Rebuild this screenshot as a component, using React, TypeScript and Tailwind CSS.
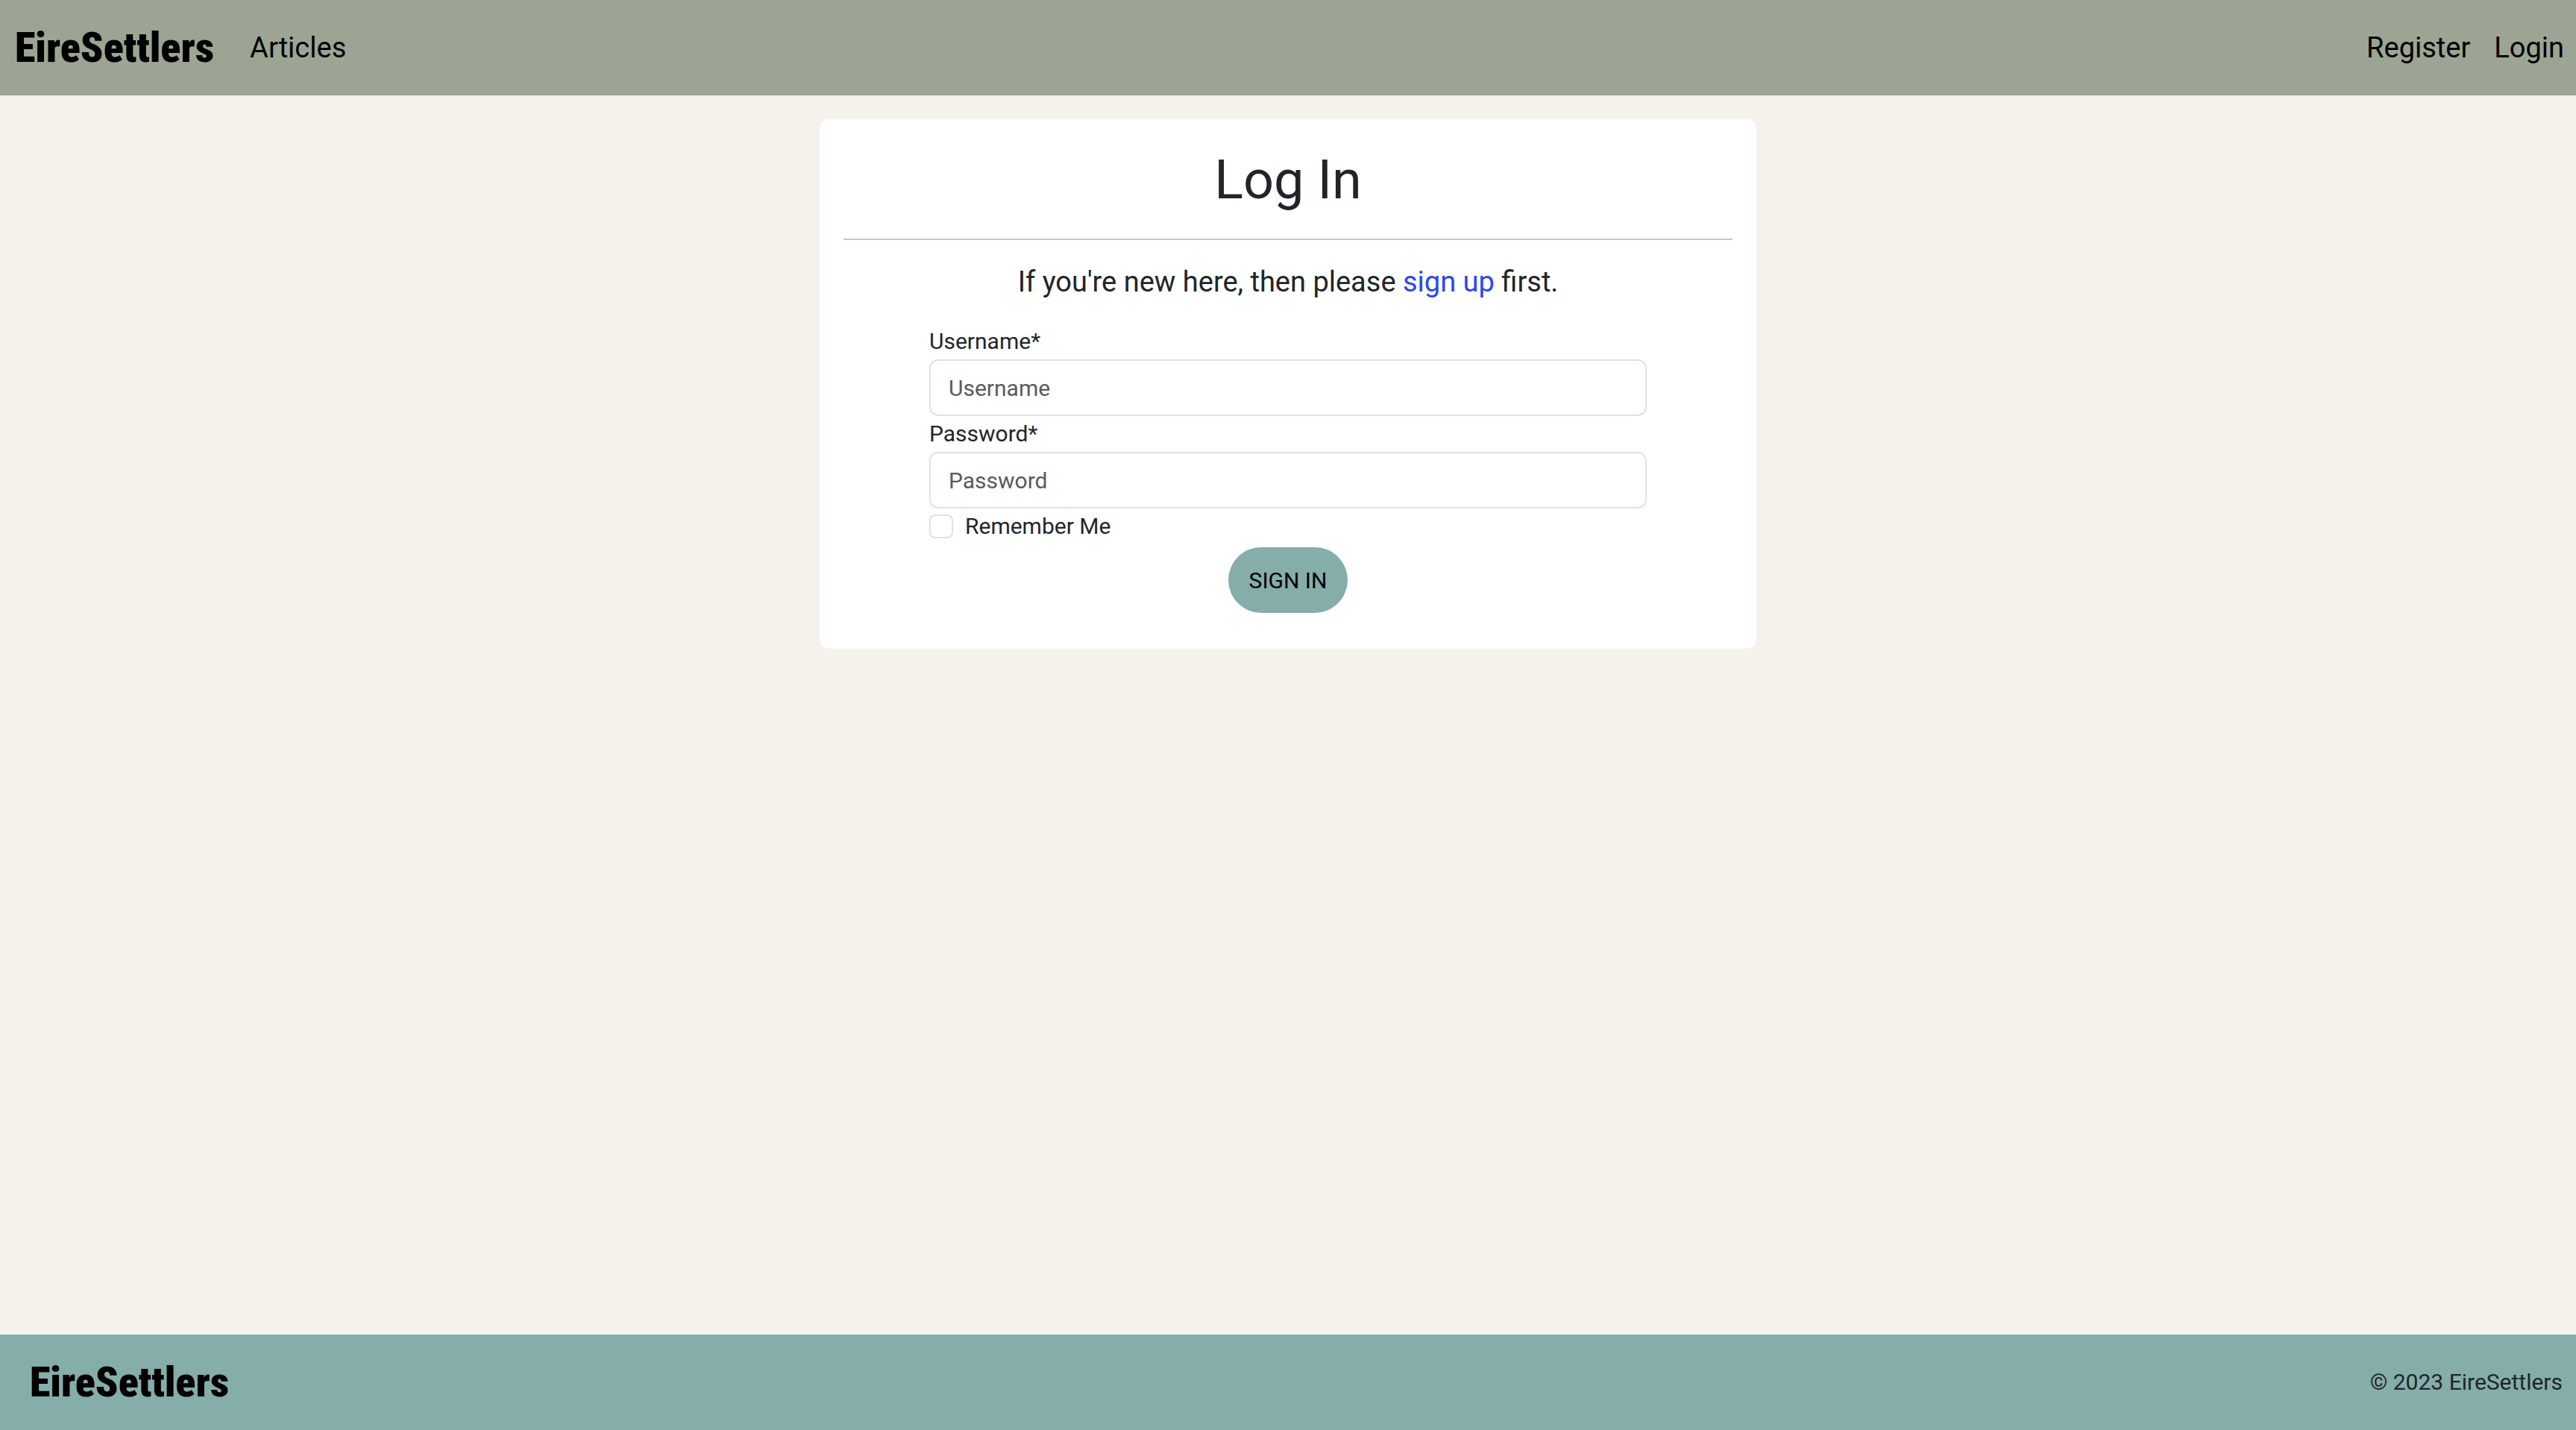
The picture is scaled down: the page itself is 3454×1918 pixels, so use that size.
import React from "react";

function Logo() {
  return (
    <a
      href="#home"
      className="font-['Roboto_Condensed','Roboto',sans-serif] text-[56px] leading-[64px] font-black text-black"
    >
      EireSettlers
    </a>
  );
}

function NavLink({ label }: { label: string }) {
  return (
    <a href={`#${label.toLowerCase()}`} className="text-[38px] leading-[64px] text-black">
      {label}
    </a>
  );
}

function Field({ id, label, type }: { id: string; label: string; type: string }) {
  return (
    <div className="flex flex-col">
      <label htmlFor={id} className="text-[30px] leading-[48px]">
        {label}*
      </label>
      <input
        id={id}
        type={type}
        placeholder={label}
        className="h-[76px] w-full rounded-xl border-2 border-[#dee2e6] bg-white px-6 text-[30px] placeholder:text-[#585b5e]"
      />
    </div>
  );
}

export default function App() {
  return (
    <div className="flex min-h-screen flex-col bg-[#f5f1eb] font-['Roboto',sans-serif] text-[#212529]">
      <header className="bg-[#9ca593]">
        <nav className="flex h-32 items-center justify-between pr-4 pl-5">
          <div className="flex items-center gap-12">
            <Logo />
            <NavLink label="Articles" />
          </div>
          <div className="flex items-center gap-8">
            <NavLink label="Register" />
            <NavLink label="Login" />
          </div>
        </nav>
      </header>

      <main className="flex grow flex-col items-center px-8 pt-8 pb-8">
        <section className="w-full max-w-[1256px] rounded-xl bg-white px-8 pt-8 pb-12">
          <h1 className="text-center text-[72px] leading-[100px]">Log In</h1>
          <hr className="mt-7 border-t-2 border-[#c7c8c9]" />
          <p className="mt-6 text-center text-[38px] leading-[64px]">
            If you're new here, then please{" "}
            <a href="#register" className="text-[#2a48f0]">
              sign up
            </a>{" "}
            first.
          </p>
          <form className="mx-auto mt-6 flex max-w-[962px] flex-col" onSubmit={(e) => e.preventDefault()}>
            <Field id="username" label="Username" type="text" />
            <Field id="password" label="Password" type="password" />
            <div className="flex h-12 items-center gap-4">
              <input
                id="remember"
                type="checkbox"
                className="size-8 appearance-none rounded-lg border-2 border-[#dee2e6] bg-white checked:bg-[#85adaa]"
              />
              <label htmlFor="remember" className="text-[30px] leading-[48px]">
                Remember Me
              </label>
            </div>
            <button
              type="submit"
              className="mt-1 h-[88px] self-center rounded-full bg-[#85adaa] px-7 text-[30px] text-black"
            >
              SIGN IN
            </button>
          </form>
        </section>
      </main>

      <footer className="flex h-32 items-center justify-between bg-[#85adaa] pr-[18px] pl-10">
        <Logo />
        <p className="text-[30px] leading-[48px]">© 2023 EireSettlers</p>
      </footer>
    </div>
  );
}
